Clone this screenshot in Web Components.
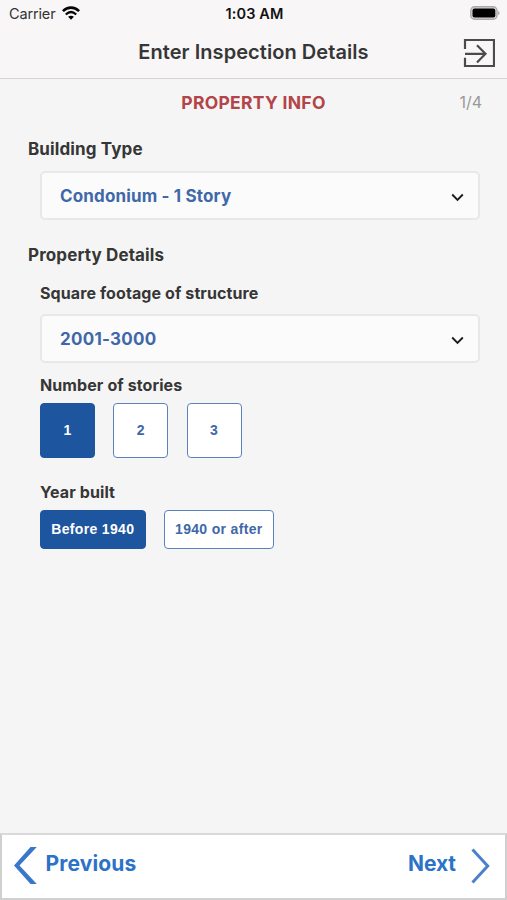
<!DOCTYPE html>
<html lang="en">
<head>
<meta charset="utf-8">
<title>Enter Inspection Details</title>
<style>
html,body{margin:0;height:100%;overflow:hidden}
body{font-family:Inter,"Liberation Sans",sans-serif;color:#363636;background:#f5f5f5}
</style>
</head>
<body>
<inspection-app></inspection-app>
<script>
const define = (name, html) => customElements.define(name, class extends HTMLElement {
  constructor() {
    super();
    this.attachShadow({ mode: 'open' }).innerHTML = html;
  }
});

define('status-bar', `<style>
:host{display:grid;grid-template-columns:1fr auto 1fr;align-items:center;height:28px;padding:0 7px 0 9px;color:#111;font-size:14.5px;line-height:28px}
.left{display:flex;align-items:center;gap:7px}
.left span{color:#333;letter-spacing:-.15px}
.time{font-weight:600;font-size:14.5px;letter-spacing:.15px}
.battery{justify-self:end;display:block;margin-top:-2px}
svg{display:block}
.wifi{margin-top:-2px}
</style>
<div class="left"><span>Carrier</span>
<svg class="wifi" width="18" height="14" viewBox="0 0 18 14" fill="none" stroke="#050505"><path d="M.9 5.1C5.5.4 12.5.4 17.1 5.1" stroke-width="2.6"/><path d="M3.8 8.5C7 5.5 11 5.5 14.2 8.5" stroke-width="2.3"/><path d="M9 13.7 6.1 10.8C7.6 9.4 10.4 9.4 11.9 10.8Z" fill="#050505" stroke="none"/></svg></div>
<div class="time">1:03 AM</div>
<svg class="battery" width="30" height="14" viewBox="0 0 30 14"><rect x=".8" y=".8" width="26.2" height="12.4" rx="3.7" fill="#d8d8d8" stroke="#aaa" stroke-width="1.4"/><rect x="2.5" y="2.5" width="22.8" height="9" rx="2" fill="#000"/><path d="M28.1 4.7q3 2.3 0 4.6z" fill="#aaa"/></svg>`);

define('page-title', `<style>
:host{display:grid;grid-template-columns:1fr auto 1fr;height:50px;padding:0 12px;border-bottom:1px solid #d6d5d6}
h1{margin:0;font-size:20px;font-weight:600;line-height:48px;letter-spacing:.06px}
svg{justify-self:end;display:block;margin-top:10px}
</style>
<span></span><h1><slot></slot></h1>
<svg width="33" height="30" viewBox="0 0 33 30" fill="none" stroke="#4b4b4b" stroke-width="2.2"><path d="M3 11V2H32V28H3V19.8M3 15.8H23.5M15 7.2 23.5 15.8 15 24.4"/></svg>`);

define('section-heading', `<style>
:host{display:grid;grid-template-columns:1fr auto 1fr;align-items:center;height:46px;padding:0 25px}
h2{margin:1px 0 0;font-size:17.5px;font-weight:700;letter-spacing:.3px;color:#b34448}
.step{justify-self:end;font-size:16px;color:#999}
</style>
<span></span><h2><slot></slot></h2><span class="step"><slot name="step"></slot></span>`);

define('field-label', `<style>
:host{display:block;font-size:16px;font-weight:700;line-height:24px;letter-spacing:.1px}
:host([level="group"]){font-size:17px;letter-spacing:.12px}
</style><slot></slot>`);

define('select-box', `<style>
:host{display:flex;align-items:center;justify-content:space-between;box-sizing:border-box;height:49px;border:2px solid #e8e8e8;border-radius:5px;background:#fbfbfb;padding:0 14px 0 18px;color:#4068a8;font-size:17px;font-weight:700}
svg{display:block;margin-top:4px}
</style><span><slot></slot></span>
<svg width="13" height="9" viewBox="0 0 13 9" fill="none" stroke="#1c1c1c" stroke-width="1.9"><path d="M1.2 1.5 6.5 6.8 11.8 1.5"/></svg>`);

define('choice-button', `<style>
:host{display:block}
button{display:block;box-sizing:border-box;width:var(--w,55px);height:var(--h,55px);padding:0 0 1px;border:1.3px solid #5d82bb;border-radius:4px;background:#fff;color:#4068a8;font:bold 14px/1 "Liberation Sans",Arial,sans-serif;letter-spacing:.33px;white-space:nowrap}
:host([selected]) button{background:#1e559f;border-color:#1e559f;color:#fff}
</style><button type="button"><slot></slot></button>`);

define('choice-row', `<style>
:host{display:flex;gap:18.3px}
</style><slot></slot>`);

define('nav-footer', `<style>
:host{display:flex;justify-content:space-between;align-items:center;box-sizing:border-box;height:67px;border:2px solid #d0d0d0;border-top-color:#dadada;background:#fff;padding:0 15px 4px 12px;color:#2c72c7;font-size:21px;font-weight:700}
.nav{display:flex;align-items:center}
.prev{gap:8.5px;letter-spacing:.15px}.next{gap:15px;letter-spacing:-.05px}
svg{display:block;margin-top:2px}
span{margin-top:-2px}
</style>
<div class="nav prev"><svg width="23" height="37" viewBox="0 0 23 37"><path d="M16.5 0H22.8L5.5 18.5 22.8 37H16.5L0 18.5Z" fill="#3977cb"/></svg><span>Previous</span></div>
<div class="nav next"><span>Next</span><svg width="19" height="36" viewBox="0 0 19 36" fill="none" stroke="#4b80cd" stroke-width="3"><path d="M1.5 1.5 16.7 18 1.5 34.5"/></svg></div>`);

define('inspection-app', `<style>
:host{display:flex;flex-direction:column;height:900px;width:507px;background:#f5f5f5}
header{background:#f8f6f7}
main{flex:1;padding:0 27px 0 28px}
.fields{padding-left:12px}
</style>
<header><status-bar></status-bar><page-title>Enter Inspection Details</page-title></header>
<section-heading>PROPERTY INFO<span slot="step">1/4</span></section-heading>
<main>
<field-label level="group" style="margin-top:12px">Building Type</field-label>
<div class="fields"><select-box style="margin-top:10px;letter-spacing:.15px">Condonium - 1 Story</select-box></div>
<field-label level="group" style="margin-top:23px">Property Details</field-label>
<div class="fields">
<field-label style="margin-top:14px">Square footage of structure</field-label>
<select-box style="margin-top:9px;letter-spacing:.25px">2001-3000</select-box>
<field-label style="margin-top:10px">Number of stories</field-label>
<choice-row style="margin-top:6px"><choice-button selected>1</choice-button><choice-button>2</choice-button><choice-button>3</choice-button></choice-row>
<field-label style="margin-top:22px">Year built</field-label>
<choice-row style="margin-top:6px;--h:39px"><choice-button selected style="--w:105.5px">Before 1940</choice-button><choice-button style="--w:110px">1940 or after</choice-button></choice-row>
</div>
</main>
<nav-footer></nav-footer>`);
</script>
</body>
</html>
